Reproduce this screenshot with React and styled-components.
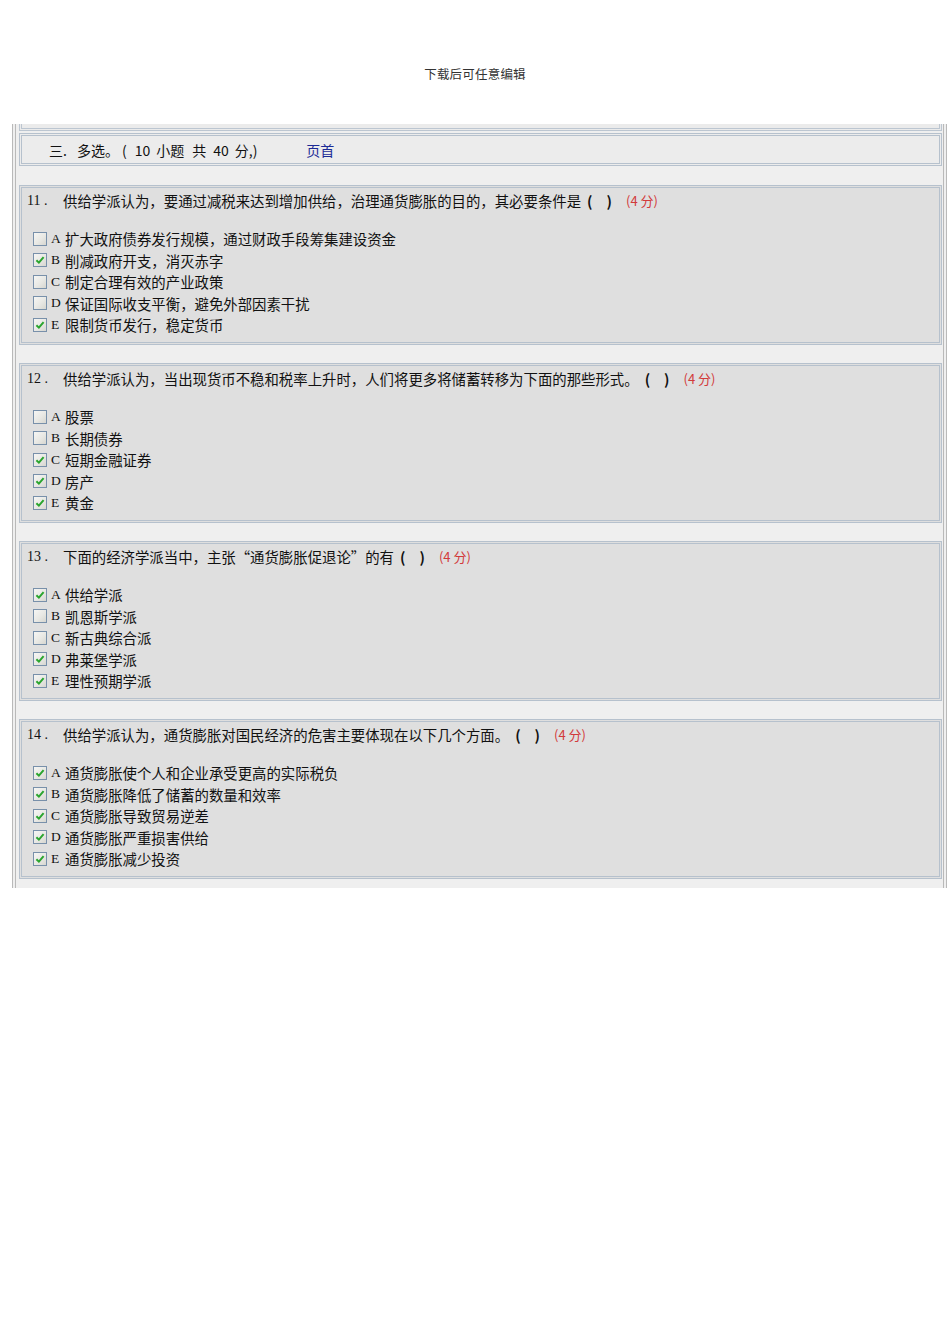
import React from "react";
import styled, { createGlobalStyle } from "styled-components";

const Global = createGlobalStyle`
  html, body { margin: 0; padding: 0; background: #ffffff; }
  body { font-family: "Noto Sans CJK SC", "Noto Sans", sans-serif; color: #111; }
`;

const Page = styled.div`
  width: 950px;
  min-height: 1344px;
  background: #fff;
`;

const Caption = styled.div`
  height: 124px;
  box-sizing: border-box;
  padding-top: 65px;
  text-align: center;
  font-size: 12.5px;
  line-height: 18px;
  color: #333;
  letter-spacing: 0.2px;
`;

const Frame = styled.div`
  margin-left: 12px;
  width: 935px;
  box-sizing: border-box;
  border-left: 4px double #b9b9b9;
  border-right: 4px double #b9b9b9;
  background: #efefef;
  padding: 0 1px 9px 3px;
  display: flex;
  flex-direction: column;
`;

const PrevStrip = styled.div`
  height: 4px;
  background: #ebebeb;
  border: 3px double #bcc6d1;
  border-top: none;
  margin-bottom: 2px;
`;

const Box = styled.div`
  box-sizing: border-box;
  border: 3px double #b6c1cd;
  background: ${(p) => (p.$header ? "#ececec" : "#dfdfdf")};
  margin-top: ${(p) => p.$gap || 0}px;
`;

const HeaderBox = styled(Box)`
  height: 33px;
  display: flex;
  align-items: center;
  padding-left: 27px;
  font-size: 14px;
  white-space: pre;
`;

const Token = styled.span`
  margin-left: ${(p) => p.$ml || 0}px;
  color: ${(p) => (p.$link ? "#1c2b96" : "inherit")};
`;

const QuestionBox = styled(Box)`
  height: 160px;
  padding: 5px 0 0 5px;
`;

const Title = styled.div`
  height: 16px;
  line-height: 16px;
  font-size: 14.4px;
  display: flex;
  align-items: center;
  white-space: pre;
  margin-bottom: 19px;
`;

const Num = styled.span`
  font-family: "Liberation Serif", serif;
  font-size: 14px;
  width: 36px;
  flex: none;
`;

const Paren = styled.span`
  font-weight: 700;
  margin-left: ${(p) => p.$l || 0}px;
  margin-right: ${(p) => p.$r || 0}px;
`;

const Score = styled.span`
  color: #d23a3a;
  font-size: 13px;
  margin-left: 14px;
`;

const OptionList = styled.div`
  display: flex;
  flex-direction: column;
  padding-left: 6px;
`;

const OptionRow = styled.div`
  height: 21.5px;
  display: flex;
  align-items: center;
  font-size: 14.4px;
`;

const Check = styled.span`
  width: 14px;
  height: 14px;
  box-sizing: border-box;
  border: 1px solid #7890aa;
  background: linear-gradient(135deg, #f6f6f4 0%, #e8e8e4 55%, #d6d6d0 100%);
  display: inline-flex;
  align-items: center;
  justify-content: center;
  flex: none;
  margin-right: 4px;
`;

const Letter = styled.span`
  font-family: "Liberation Serif", serif;
  font-size: 13.5px;
  width: 14px;
  flex: none;
`;

const Tick = () => (
  <svg width="10" height="10" viewBox="0 0 10 10">
    <path d="M1.4 5.2 L3.9 7.6 L8.6 2.2" fill="none" stroke="#2aa52e" strokeWidth="2" />
  </svg>
);

const questions = [
  {
    n: "11",
    text: "供给学派认为，要通过减税来达到增加供给，治理通货膨胀的目的，其必要条件是",
    options: [
      ["A", "扩大政府债券发行规模，通过财政手段筹集建设资金", false],
      ["B", "削减政府开支，消灭赤字", true],
      ["C", "制定合理有效的产业政策", false],
      ["D", "保证国际收支平衡，避免外部因素干扰", false],
      ["E", "限制货币发行，稳定货币", true],
    ],
  },
  {
    n: "12",
    text: "供给学派认为，当出现货币不稳和税率上升时，人们将更多将储蓄转移为下面的那些形式。",
    options: [
      ["A", "股票", false],
      ["B", "长期债券", false],
      ["C", "短期金融证券", true],
      ["D", "房产", true],
      ["E", "黄金", true],
    ],
  },
  {
    n: "13",
    text: "下面的经济学派当中，主张“通货膨胀促退论”的有",
    options: [
      ["A", "供给学派", true],
      ["B", "凯恩斯学派", false],
      ["C", "新古典综合派", false],
      ["D", "弗莱堡学派", true],
      ["E", "理性预期学派", true],
    ],
  },
  {
    n: "14",
    text: "供给学派认为，通货膨胀对国民经济的危害主要体现在以下几个方面。",
    options: [
      ["A", "通货膨胀使个人和企业承受更高的实际税负", true],
      ["B", "通货膨胀降低了储蓄的数量和效率", true],
      ["C", "通货膨胀导致贸易逆差", true],
      ["D", "通货膨胀严重损害供给", true],
      ["E", "通货膨胀减少投资", true],
    ],
  },
];

const headerTokens = [
  ["三.", 0],
  ["多选。", 10],
  ["(", 3],
  ["10", 8],
  ["小题", 6],
  ["共", 8],
  ["40", 7],
  ["分,)", 6],
];

export default function App() {
  return (
    <Page>
      <Global />
      <Caption>下载后可任意编辑</Caption>
      <Frame>
        <PrevStrip />
        <HeaderBox $header>
          {headerTokens.map(([t, ml]) => (
            <Token key={t} $ml={ml}>{t}</Token>
          ))}
          <Token $ml={49} $link>页首</Token>
        </HeaderBox>
        {questions.map((q, i) => (
          <QuestionBox key={q.n} $gap={i === 0 ? 19 : 18}>
            <Title>
              <Num>{q.n} .</Num>
              {q.text}
              <Paren $l={6} $r={10}>(</Paren>
              <Paren $l={4}>)</Paren>
              <Score>(4 分)</Score>
            </Title>
            <OptionList>
              {q.options.map(([l, t, c]) => (
                <OptionRow key={l}>
                  <Check>{c && <Tick />}</Check>
                  <Letter>{l}</Letter>
                  {t}
                </OptionRow>
              ))}
            </OptionList>
          </QuestionBox>
        ))}
      </Frame>
    </Page>
  );
}
